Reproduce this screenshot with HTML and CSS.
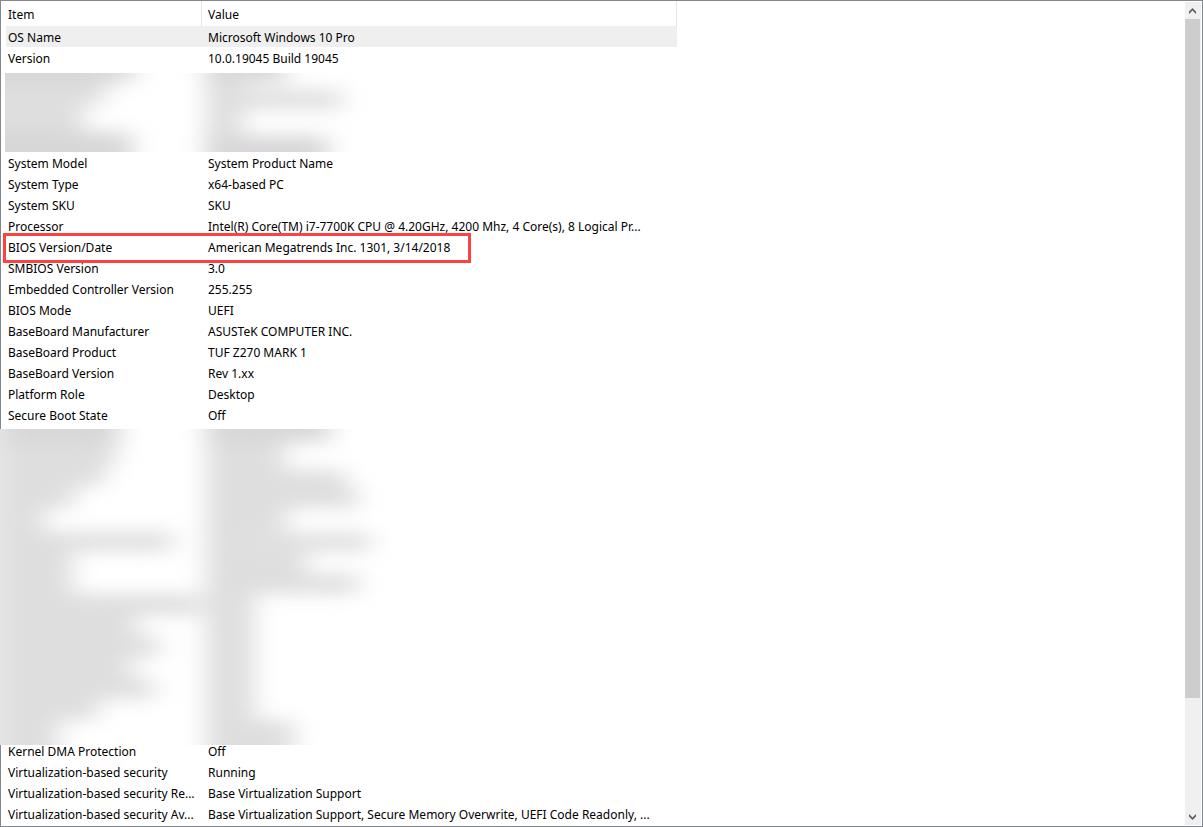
FILE: index.html
```html
<!DOCTYPE html>
<html lang="en">
<head>
  <meta charset="UTF-8" />
  <meta name="viewport" content="width=device-width, initial-scale=1" />
  <title>System Information</title>
  <link rel="stylesheet" href="styles.css">
</head>
<body>

  <div class="panel">
    <main class="list">
      <table>
        <colgroup>
          <col class="col-item">
          <col class="col-value">
        </colgroup>
        <thead>
          <tr><th scope="col">Item</th><th scope="col">Value</th></tr>
        </thead>
        <tbody>
          <tr class="selected"><td>OS Name</td><td>Microsoft Windows 10 Pro</td></tr>
          <tr><td>Version</td><td>10.0.19045 Build 19045</td></tr>
          <tr class="hidden-rows rows-4">
            <td colspan="2">
              <svg class="redacted redacted-top" width="395" height="79" viewBox="5 73 395 79" aria-hidden="true">
                <defs>
                  <filter id="blur" filterUnits="userSpaceOnUse" x="-80" y="0" width="560" height="827" color-interpolation-filters="sRGB">
                    <feGaussianBlur stdDeviation="13 9" />
                  </filter>
                </defs>
                <rect class="paper" x="5" y="73" width="395" height="79" />
                <g class="smudge" filter="url(#blur)">
                  <rect class="dark" x="-25" y="50" width="159" height="32" />
                  <rect x="-25" y="82" width="130" height="22" />
                  <rect x="-25" y="104" width="108" height="28" />
                  <rect class="dark" x="-25" y="132" width="157" height="46" />
                  <rect class="dark" x="206" y="50" width="80" height="32" />
                  <rect x="206" y="82" width="36" height="54" />
                  <rect x="240" y="90" width="102" height="19" />
                  <rect class="dark" x="206" y="136" width="122" height="42" />
                </g>
              </svg>
            </td>
          </tr>
          <tr><td>System Model</td><td>System Product Name</td></tr>
          <tr><td>System Type</td><td>x64-based PC</td></tr>
          <tr><td>System SKU</td><td>SKU</td></tr>
          <tr><td>Processor</td><td>Intel(R) Core(TM) i7-7700K CPU @ 4.20GHz, 4200 Mhz, 4 Core(s), 8 Logical Pr...</td></tr>
          <tr class="marked"><td>BIOS Version/Date<span class="marker"></span></td><td>American Megatrends Inc. 1301, 3/14/2018</td></tr>
          <tr><td>SMBIOS Version</td><td>3.0</td></tr>
          <tr><td>Embedded Controller Version</td><td>255.255</td></tr>
          <tr><td>BIOS Mode</td><td>UEFI</td></tr>
          <tr><td>BaseBoard Manufacturer</td><td>ASUSTeK COMPUTER INC.</td></tr>
          <tr><td>BaseBoard Product</td><td>TUF Z270 MARK 1</td></tr>
          <tr><td>BaseBoard Version</td><td>Rev 1.xx</td></tr>
          <tr><td>Platform Role</td><td>Desktop</td></tr>
          <tr><td>Secure Boot State</td><td>Off</td></tr>
          <tr class="hidden-rows rows-15">
            <td colspan="2">
              <svg class="redacted redacted-bottom" width="400" height="316" viewBox="0 429 400 316" aria-hidden="true">
                <rect class="paper" x="0" y="429" width="400" height="316" />
                <g class="smudge" filter="url(#blur)">
                  <rect class="light" x="-40" y="400" width="50" height="370" />
                  <rect class="dark" x="6" y="400" width="114" height="42" />
                  <rect x="6" y="442" width="110" height="24" />
                  <rect x="6" y="466" width="98" height="20" />
                  <rect x="6" y="486" width="68" height="22" />
                  <rect x="6" y="508" width="38" height="24" />
                  <rect x="6" y="532" width="166" height="19" />
                  <rect x="6" y="551" width="66" height="43" />
                  <rect x="6" y="594" width="194" height="21" />
                  <rect x="6" y="615" width="130" height="21" />
                  <rect x="6" y="636" width="153" height="21" />
                  <rect x="6" y="657" width="124" height="21" />
                  <rect x="6" y="678" width="148" height="21" />
                  <rect x="6" y="699" width="92" height="21" />
                  <rect x="6" y="720" width="52" height="50" />
                  <rect class="dark" x="206" y="400" width="124" height="42" />
                  <rect x="206" y="442" width="78" height="28" />
                  <rect x="206" y="470" width="140" height="18" />
                  <rect x="206" y="488" width="152" height="20" />
                  <rect x="206" y="508" width="80" height="24" />
                  <rect x="206" y="532" width="34" height="20" />
                  <rect x="240" y="533" width="130" height="18" />
                  <rect x="206" y="552" width="100" height="22" />
                  <rect x="206" y="574" width="152" height="20" />
                  <rect x="206" y="594" width="48" height="126" />
                  <rect x="206" y="720" width="88" height="50" />
                </g>
              </svg>
            </td>
          </tr>
          <tr><td>Kernel DMA Protection</td><td>Off</td></tr>
          <tr><td>Virtualization-based security</td><td>Running</td></tr>
          <tr><td>Virtualization-based security Re...</td><td>Base Virtualization Support</td></tr>
          <tr><td>Virtualization-based security Av...</td><td>Base Virtualization Support, Secure Memory Overwrite, UEFI Code Readonly, ...</td></tr>
        </tbody>
      </table>
    </main>

    <div class="scrollbar">
      <button type="button" aria-label="Scroll up">
        <svg width="16" height="17" viewBox="0 0 16 17"><path d="M4 9.5 L7.5 6 L11 9.5 V12 L7.5 8.5 L4 12 Z" /></svg>
      </button>
      <div class="track"><div class="thumb"></div></div>
      <button type="button" aria-label="Scroll down">
        <svg width="16" height="17" viewBox="0 0 16 17"><path d="M4 6 L7.5 9.5 L11 6 V8.5 L7.5 12 L4 8.5 Z" /></svg>
      </button>
    </div>
  </div>

</body>
</html>
```
FILE: styles.css
```css
* {
  box-sizing: border-box;
}

body {
  margin: 0;
  background: #fff;
  color: #000;
  font-family: "Noto Sans", "Segoe UI", sans-serif;
  font-size: 12px;
}

.panel {
  display: flex;
  min-height: 100vh;
  border: 1px solid #828790;
}

.list {
  flex: 1;
  min-width: 0;
  padding-left: 5px;
}

/* Table */
table {
  width: 671px;
  table-layout: fixed;
  border-collapse: separate;
  border-spacing: 0;
}

.col-item {
  width: 196px;
}

th,
td {
  height: 21px;
  padding: 3px 0 0 2px;
  line-height: 18px;
  font-weight: normal;
  text-align: left;
  white-space: nowrap;
}

th {
  height: 25px;
}

th {
  border-right: 1px solid #e5e5e5;
}

th + th,
td + td {
  padding-left: 6px;
}

.selected td {
  background: #efefef;
}

/* Frame around the BIOS row */
.marked td {
  position: relative;
}

.marker {
  position: absolute;
  z-index: 1;
  top: -3px;
  left: -3px;
  width: 468px;
  height: 30px;
  border: 3px solid #fa4343;
}

/* Blurred rows */
.hidden-rows td {
  position: relative;
  padding: 0;
}

.rows-4 td {
  height: 84px;
}

.rows-15 td {
  height: 315px;
}

.redacted {
  position: absolute;
  overflow: hidden;
}

.redacted-top {
  top: 5px;
  left: -1px;
}

.redacted-bottom {
  top: 4px;
  left: -6px;
}

.paper {
  fill: #fff;
}

.smudge {
  fill: #dedede;
}

.smudge .dark {
  fill: #d8d6d8;
}

.smudge .light {
  fill: #e6e6e6;
}

/* Scrollbar */
.scrollbar {
  display: flex;
  flex-direction: column;
  width: 16px;
  margin: 1px 1px 1px 0;
  background: #f0f0f0;
}

.scrollbar button {
  height: 17px;
  padding: 0;
  border: 0;
  background: none;
}

.scrollbar svg {
  display: block;
  fill: #606060;
}

.track {
  display: flex;
  flex: 1;
}

.thumb {
  width: 15px;
  height: 86%;
  background: #cdcdcd;
}
```
